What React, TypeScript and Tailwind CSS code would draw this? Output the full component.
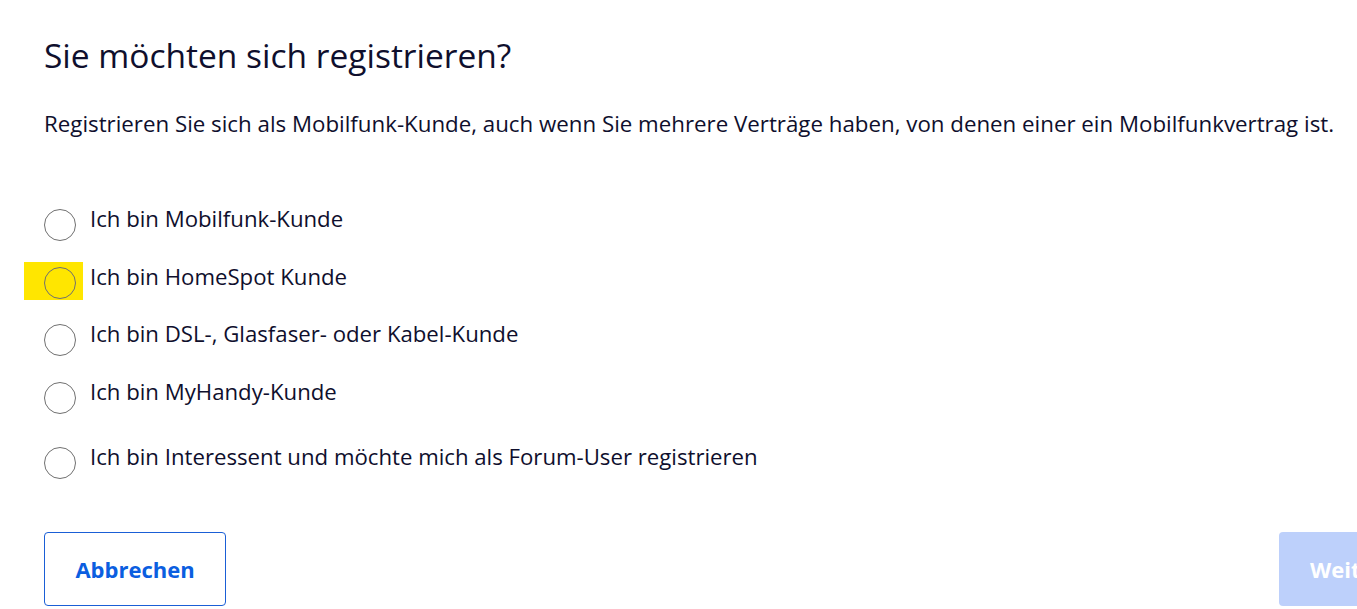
import React from "react";

const options = [
  { label: "Ich bin Mobilfunk-Kunde", h: "h-[58px]", hl: false },
  { label: "Ich bin HomeSpot Kunde", h: "h-[57px]", hl: true },
  { label: "Ich bin DSL-, Glasfaser- oder Kabel-Kunde", h: "h-[58px]", hl: false },
  { label: "Ich bin MyHandy-Kunde", h: "h-[65px]", hl: false },
  { label: "Ich bin Interessent und möchte mich als Forum-User registrieren", h: "h-[30px]", hl: false },
];

export default function App() {
  return (
    <div className="w-[1357px] h-[609px] overflow-hidden bg-white text-[#0f0f2d]" style={{ fontFamily: '"Open Sans", "Noto Sans", sans-serif' }}>
      <div className="pl-[44px] pt-[33px]">
        <h1 className="text-[33.5px] leading-[44px] font-normal">Sie möchten sich registrieren?</h1>
        <p className="mt-[32px] text-[22.3px] leading-[30px] whitespace-nowrap">
          Registrieren Sie sich als Mobilfunk-Kunde, auch wenn Sie mehrere Verträge haben, von denen einer ein Mobilfunkvertrag ist.
        </p>
        <div className="mt-[65px] flex flex-col">
          {options.map((o) => (
            <div key={o.label} className={`flex items-start ${o.h}`}>
              <div className="relative w-[46px] h-[30px] shrink-0">
                {o.hl && <div className="absolute left-[-20px] top-0 w-[59px] h-[38px] bg-[#ffe600]" />}
                <div className="relative mt-[5px] w-[32px] h-[32px] rounded-full border border-[#707070]" />
              </div>
              <span className="text-[22.2px] leading-[30px] whitespace-nowrap">{o.label}</span>
            </div>
          ))}
        </div>
        <div className="mt-[60px] flex justify-between">
          <button className="w-[182px] h-[74px] rounded-[4px] border border-[#1a5fd6] text-[#0b5ee0] font-bold text-[22px]">
            Abbrechen
          </button>
          <button className="w-[160px] h-[74px] rounded-[4px] bg-[#bdd0fb] text-white font-bold text-[22px] text-left pl-[31px] mr-[-82px] whitespace-nowrap">
            Weiter
          </button>
        </div>
      </div>
    </div>
  );
}
